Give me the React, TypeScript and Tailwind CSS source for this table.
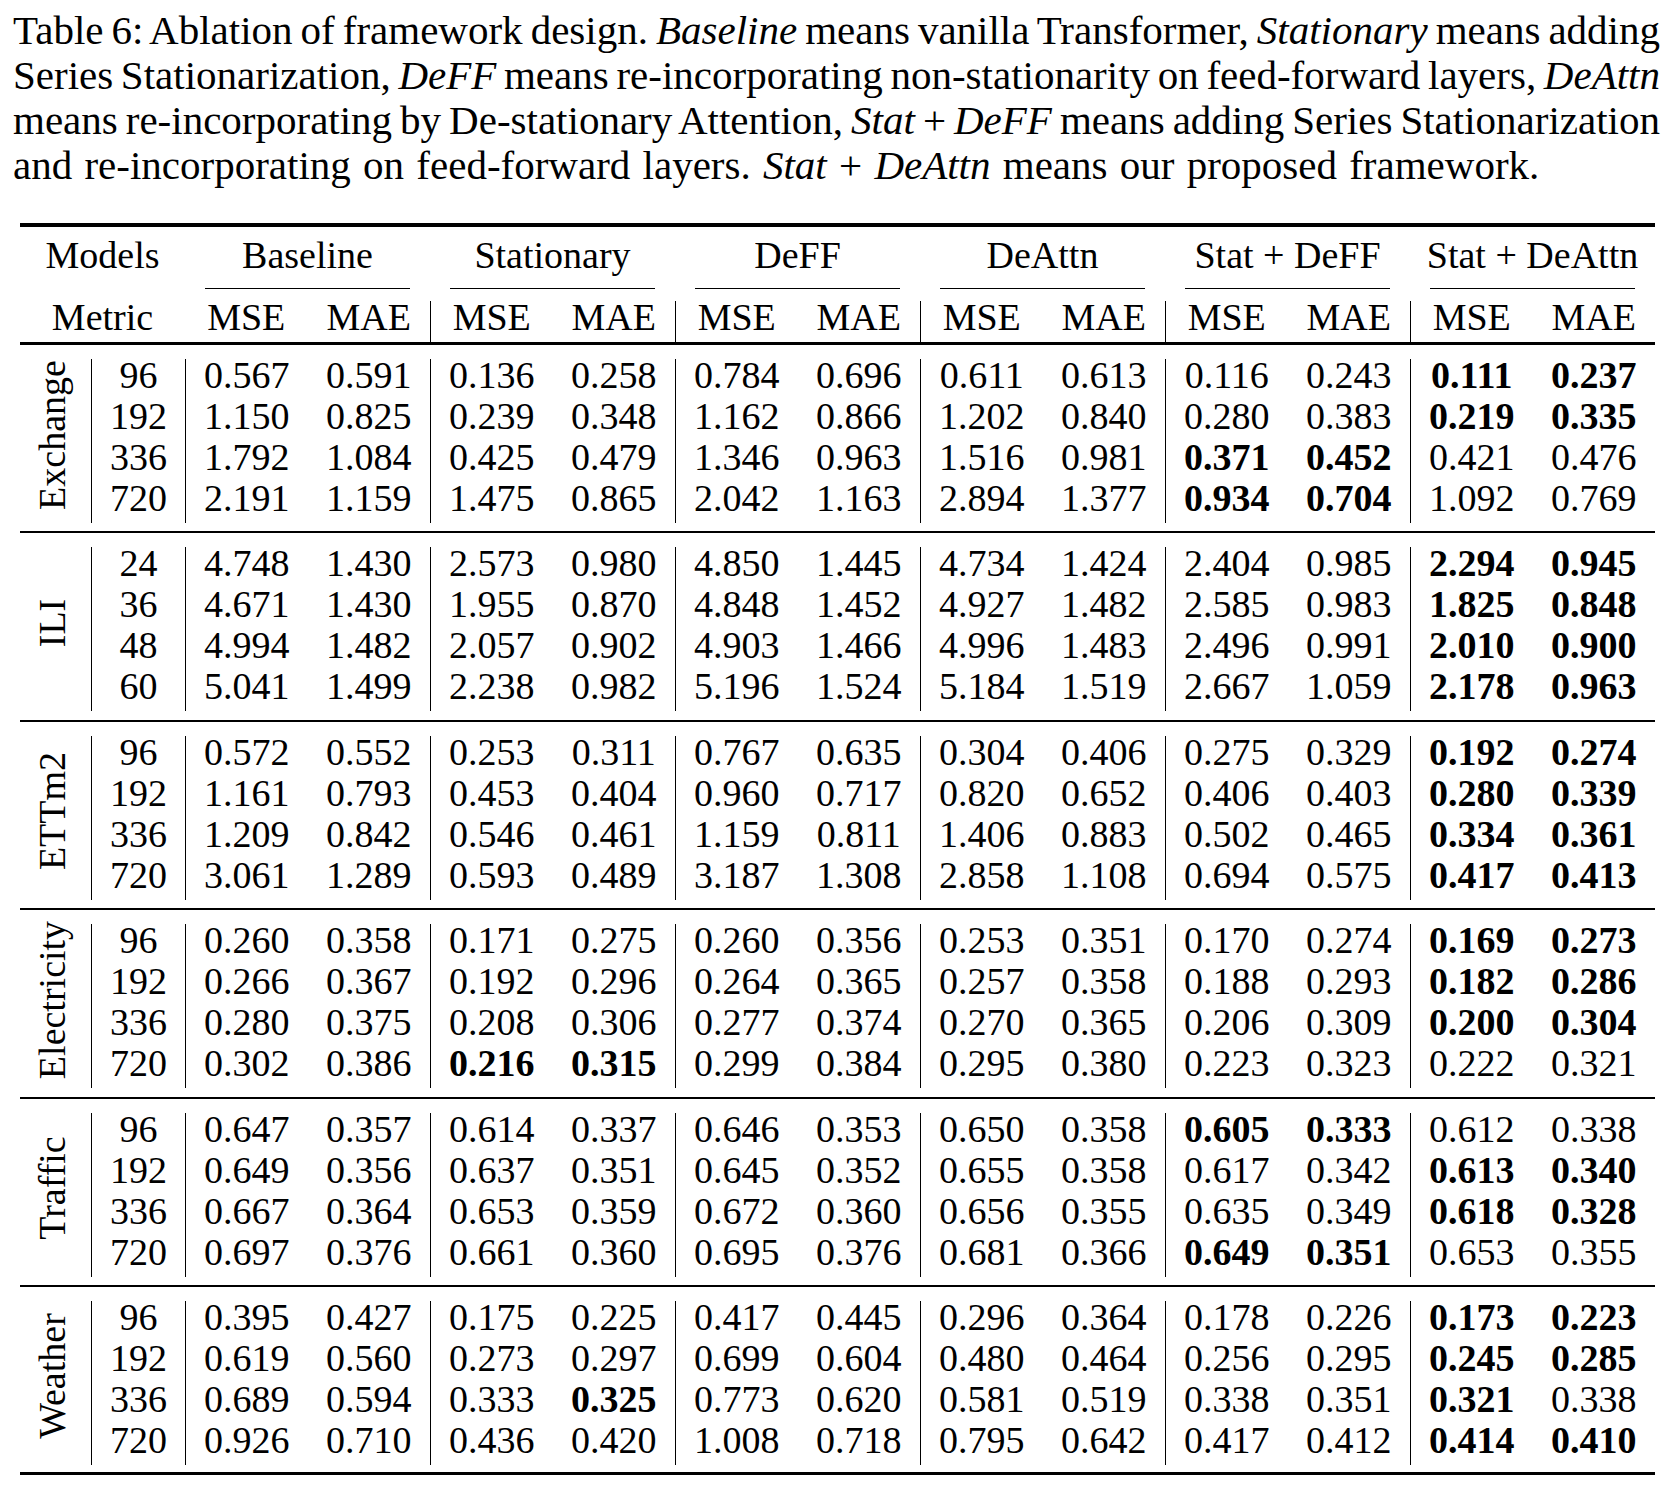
import React from "react";

const groups = ["Baseline", "Stationary", "DeFF", "DeAttn", "Stat + DeFF", "Stat + DeAttn"];

type Row = { h: string; v: string };
type Section = { name: string; rows: Row[] };

const data: Section[] = [
  {
    name: "Exchange",
    rows: [
      { h: "96", v: "0.567 0.591 0.136 0.258 0.784 0.696 0.611 0.613 0.116 0.243 *0.111 *0.237" },
      { h: "192", v: "1.150 0.825 0.239 0.348 1.162 0.866 1.202 0.840 0.280 0.383 *0.219 *0.335" },
      { h: "336", v: "1.792 1.084 0.425 0.479 1.346 0.963 1.516 0.981 *0.371 *0.452 0.421 0.476" },
      { h: "720", v: "2.191 1.159 1.475 0.865 2.042 1.163 2.894 1.377 *0.934 *0.704 1.092 0.769" },
    ],
  },
  {
    name: "ILI",
    rows: [
      { h: "24", v: "4.748 1.430 2.573 0.980 4.850 1.445 4.734 1.424 2.404 0.985 *2.294 *0.945" },
      { h: "36", v: "4.671 1.430 1.955 0.870 4.848 1.452 4.927 1.482 2.585 0.983 *1.825 *0.848" },
      { h: "48", v: "4.994 1.482 2.057 0.902 4.903 1.466 4.996 1.483 2.496 0.991 *2.010 *0.900" },
      { h: "60", v: "5.041 1.499 2.238 0.982 5.196 1.524 5.184 1.519 2.667 1.059 *2.178 *0.963" },
    ],
  },
  {
    name: "ETTm2",
    rows: [
      { h: "96", v: "0.572 0.552 0.253 0.311 0.767 0.635 0.304 0.406 0.275 0.329 *0.192 *0.274" },
      { h: "192", v: "1.161 0.793 0.453 0.404 0.960 0.717 0.820 0.652 0.406 0.403 *0.280 *0.339" },
      { h: "336", v: "1.209 0.842 0.546 0.461 1.159 0.811 1.406 0.883 0.502 0.465 *0.334 *0.361" },
      { h: "720", v: "3.061 1.289 0.593 0.489 3.187 1.308 2.858 1.108 0.694 0.575 *0.417 *0.413" },
    ],
  },
  {
    name: "Electricity",
    rows: [
      { h: "96", v: "0.260 0.358 0.171 0.275 0.260 0.356 0.253 0.351 0.170 0.274 *0.169 *0.273" },
      { h: "192", v: "0.266 0.367 0.192 0.296 0.264 0.365 0.257 0.358 0.188 0.293 *0.182 *0.286" },
      { h: "336", v: "0.280 0.375 0.208 0.306 0.277 0.374 0.270 0.365 0.206 0.309 *0.200 *0.304" },
      { h: "720", v: "0.302 0.386 *0.216 *0.315 0.299 0.384 0.295 0.380 0.223 0.323 0.222 0.321" },
    ],
  },
  {
    name: "Traffic",
    rows: [
      { h: "96", v: "0.647 0.357 0.614 0.337 0.646 0.353 0.650 0.358 *0.605 *0.333 0.612 0.338" },
      { h: "192", v: "0.649 0.356 0.637 0.351 0.645 0.352 0.655 0.358 0.617 0.342 *0.613 *0.340" },
      { h: "336", v: "0.667 0.364 0.653 0.359 0.672 0.360 0.656 0.355 0.635 0.349 *0.618 *0.328" },
      { h: "720", v: "0.697 0.376 0.661 0.360 0.695 0.376 0.681 0.366 *0.649 *0.351 0.653 0.355" },
    ],
  },
  {
    name: "Weather",
    rows: [
      { h: "96", v: "0.395 0.427 0.175 0.225 0.417 0.445 0.296 0.364 0.178 0.226 *0.173 *0.223" },
      { h: "192", v: "0.619 0.560 0.273 0.297 0.699 0.604 0.480 0.464 0.256 0.295 *0.245 *0.285" },
      { h: "336", v: "0.689 0.594 0.333 *0.325 0.773 0.620 0.581 0.519 0.338 0.351 *0.321 0.338" },
      { h: "720", v: "0.926 0.710 0.436 0.420 1.008 0.718 0.795 0.642 0.417 0.412 *0.414 *0.410" },
    ],
  },
];

function DataSection({ s, first, last }: { s: Section; first: boolean; last: boolean }) {
  return (
    <div
      className={`border-black ${first ? "border-t-[3px]" : "border-t-2"} pt-[14px] ${
        last ? "pb-[7px]" : "pb-[8.4px]"
      }`}
    >
      <div className="grid grid-cols-[71px_94px_repeat(12,122.5px)] grid-rows-[repeat(4,41px)]">
        <div className="row-span-4 flex items-center justify-center">
          <span className="-rotate-90 whitespace-nowrap leading-[42px] mb-[13px] mr-[7px]">{s.name}</span>
        </div>
        {s.rows.map((r) => (
          <React.Fragment key={r.h}>
            <div className="border-l border-black text-center leading-[32px]">{r.h}</div>
            {r.v.split(" ").map((raw, j) => {
              const bold = raw.startsWith("*");
              const val = bold ? raw.slice(1) : raw;
              return (
                <div
                  key={j}
                  className={`text-center leading-[32px] ${j % 2 === 0 ? "border-l border-black" : ""} ${
                    bold ? "font-bold" : ""
                  }`}
                >
                  {val}
                </div>
              );
            })}
          </React.Fragment>
        ))}
      </div>
    </div>
  );
}

export default function App() {
  return (
    <div className="w-[1668px] h-[1490px] bg-white text-black font-['Liberation_Serif'] text-[38px]">
      <div className="ml-[13px] w-[1647px] pt-[8px] text-[41px] leading-[45px]">
        <div className="whitespace-nowrap text-justify [text-align-last:justify] [word-spacing:-3px]">
          Table 6: Ablation of framework design. <i>Baseline</i> means vanilla Transformer, <i>Stationary</i> means adding
        </div>
        <div className="whitespace-nowrap text-justify [text-align-last:justify] [word-spacing:-3px]">
          Series Stationarization, <i>DeFF</i> means re-incorporating non-stationarity on feed-forward layers, <i>DeAttn</i>
        </div>
        <div className="whitespace-nowrap text-justify [text-align-last:justify] [word-spacing:-3px]">
          means re-incorporating by De-stationary Attention, <i>Stat</i> + <i>DeFF</i> means adding Series Stationarization
        </div>
        <div className="whitespace-nowrap [word-spacing:2px]">
          and re-incorporating on feed-forward layers. <i>Stat</i> + <i>DeAttn</i> means our proposed framework.
        </div>
      </div>

      <div className="ml-[20px] w-[1635px] mt-[35px] border-t-4 border-b-[3px] border-black">
        <div className="grid grid-cols-[165px_repeat(6,245px)] h-[62px]">
          <div className="pt-[12px] text-center leading-[32px]">Models</div>
          {groups.map((g) => (
            <div key={g} className="flex flex-col justify-between pt-[12px]">
              <div className="text-center leading-[32px] whitespace-nowrap">{g}</div>
              <div className="mx-[20px] h-px bg-black" />
            </div>
          ))}
        </div>
        <div className="mt-[12px] grid grid-cols-[165px_repeat(12,122.5px)] h-[41px]">
          <div className="text-center leading-[32px]">Metric</div>
          {groups.map((g, i) => (
            <React.Fragment key={g}>
              <div className={`text-center leading-[32px] ${i > 0 ? "border-l border-black" : ""}`}>MSE</div>
              <div className="text-center leading-[32px]">MAE</div>
            </React.Fragment>
          ))}
        </div>
        {data.map((s, i) => (
          <DataSection key={s.name} s={s} first={i === 0} last={i === data.length - 1} />
        ))}
      </div>
    </div>
  );
}
